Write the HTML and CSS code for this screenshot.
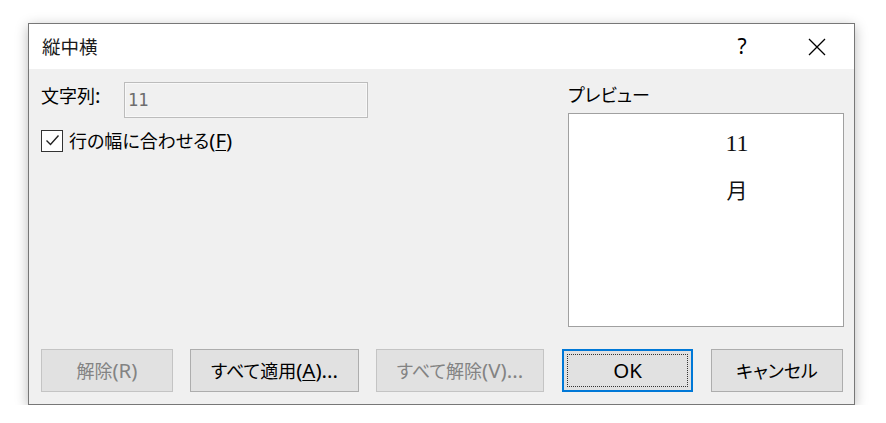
FILE: index.html
```html
<!DOCTYPE html>
<html lang="ja">
<head>
    <meta charset="UTF-8">
    <title>縦中横</title>
    <link rel="stylesheet" href="styles.css">
</head>
<body>

    <div class="dialog">
        <!-- Title bar -->
        <div class="titlebar">
            <span class="title">縦中横</span>
            <span class="help">?</span>
            <span class="close">
                <svg width="18" height="18" viewBox="0 0 18 18">
                    <path d="M1 1 L17 17 M17 1 L1 17" stroke="#000" stroke-width="1.3" fill="none"/>
                </svg>
            </span>
        </div>

        <div class="content">
            <div class="main">
                <div class="left">
                    <div class="field-row">
                        <span class="label">文字列<span class="lat">:</span></span>
                        <div class="textbox">11</div>
                    </div>
                    <div class="check-row">
                        <span class="checkbox">
                            <svg width="19" height="19" viewBox="0 0 19 19">
                                <path d="M3.5 9.5 L7.5 13.5 L15.5 4.5" stroke="#222" stroke-width="1.4" fill="none"/>
                            </svg>
                        </span>
                        <span>行の幅に合わせる<span class="lat">(<u>F</u>)</span></span>
                    </div>
                </div>

                <div class="right">
                    <div class="preview-label">プレビュー</div>
                    <div class="preview">
                        <div class="preview-col">
                            <div class="digits">11</div>
                            <div>月</div>
                        </div>
                    </div>
                </div>
            </div>

            <!-- Buttons -->
            <div class="buttons">
                <button class="btn w-132" disabled>解除<span class="lat">(R)</span></button>
                <button class="btn w-169">すべて適用<span class="lat">(<u>A</u>)...</span></button>
                <button class="btn w-168" disabled>すべて解除<span class="lat">(V)...</span></button>
                <button class="btn w-131 ok"><span class="lat">OK</span></button>
                <button class="btn w-132 cancel">キャンセル</button>
            </div>
        </div>
    </div>

</body>
</html>
```

FILE: styles.css
```css
/* Page */
body {
    margin: 0;
    padding: 23px 0 0 28px;
    background: #ffffff;
    font-family: "Noto Sans", "Noto Sans CJK JP", sans-serif;
    font-feature-settings: "palt";
    font-size: 18px;
    color: #000000;
}

/* Latin parts of mixed labels are set a little larger */
.lat {
    font-family: "Noto Sans", sans-serif;
    font-size: 20.5px;
}

/* Dialog window */
.dialog {
    width: 825px;
    height: 380px;
    border: 1px solid #777777;
    background: #f0f0f0;
    box-shadow: 0 3px 12px rgba(0, 0, 0, 0.28);
    display: flex;
    flex-direction: column;
}

.titlebar {
    height: 45px;
    background: #ffffff;
    display: flex;
    align-items: center;
    padding-left: 13px;
}

.title {
    flex: 1;
    font-size: 18.5px;
    line-height: 45px;
    color: #1a1a1a;
}

.help {
    width: 76px;
    text-align: center;
    font-size: 21px;
    line-height: 45px;
}

.close {
    width: 74px;
    height: 45px;
    display: flex;
    align-items: center;
    justify-content: center;
}

/* Content area */
.content {
    flex: 1;
    padding: 13px 10px 12px 12px;
    display: flex;
    flex-direction: column;
}

.main {
    display: flex;
    justify-content: space-between;
}

.field-row {
    display: flex;
    align-items: flex-start;
}

.label {
    width: 83px;
    line-height: 26px;
}

.textbox {
    width: 239px;
    height: 34px;
    border: 1px solid #bcbcbc;
    box-shadow: inset 0 0 0 1px #f8f8f8;
    background: #f0f0f0;
    padding-left: 3px;
    font-family: "DejaVu Sans Mono", monospace;
    font-size: 17px;
    line-height: 34px;
    color: #6d6d6d;
}

.check-row {
    display: flex;
    align-items: center;
    gap: 6px;
    margin-top: 11px;
    line-height: 22px;
}

.checkbox {
    width: 20px;
    height: 20px;
    border: 1px solid #333333;
    background: #ffffff;
    display: flex;
    align-items: center;
    justify-content: center;
}

u {
    text-decoration-thickness: 1px;
    text-underline-offset: 2px;
}

/* Preview */
.right {
    width: 276px;
}

.preview-label {
    line-height: 26px;
    margin-bottom: 5px;
}

.preview {
    height: 214px;
    border: 1px solid #a0a0a0;
    background: #ffffff;
    display: flex;
    justify-content: center;
    padding: 5px 0 0 62px;
    box-sizing: border-box;
}

.preview-col {
    font-family: "Liberation Serif", "Noto Sans CJK JP", serif;
    font-size: 21px;
    line-height: 48px;
    text-align: center;
    color: #111111;
}

.digits {
    font-size: 24px;
}

/* Buttons */
.buttons {
    display: flex;
    gap: 17px;
    margin-top: 22px;
}

.btn {
    height: 43px;
    border: 1px solid #adadad;
    background: #e1e1e1;
    font-family: "Noto Sans", "Noto Sans CJK JP", sans-serif;
    font-feature-settings: "palt";
    font-size: 18px;
    line-height: 26px;
    color: #000000;
    padding: 0;
}

.btn:disabled {
    border-color: #c4c4c4;
    color: #838383;
}

.w-131 { width: 131px; }
.w-132 { width: 132px; }
.w-168 { width: 168px; }
.w-169 { width: 169px; }

.ok {
    margin-left: 1px;
    border: 2px solid #0078d7;
    outline: 1px dotted #333333;
    outline-offset: -6px;
}

.cancel {
    margin-left: 1px;
}
```
